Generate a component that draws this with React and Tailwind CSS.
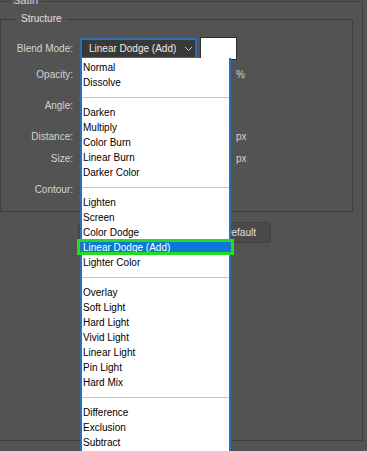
const modes = [
  'Normal',
  'Dissolve',
  null,
  'Darken',
  'Multiply',
  'Color Burn',
  'Linear Burn',
  'Darker Color',
  null,
  'Lighten',
  'Screen',
  'Color Dodge',
  'Linear Dodge (Add)',
  'Lighter Color',
  null,
  'Overlay',
  'Soft Light',
  'Hard Light',
  'Vivid Light',
  'Linear Light',
  'Pin Light',
  'Hard Mix',
  null,
  'Difference',
  'Exclusion',
  'Subtract',
  'Divide',
  null,
  'Hue',
];

const selected = 'Linear Dodge (Add)';

function Chevron() {
  return (
    <svg width="9" height="6" viewBox="0 0 9 6" fill="none" stroke="#c8c8c8" strokeWidth="1">
      <path d="M1 1l3.5 3.5L8 1" />
    </svg>
  );
}

function UnitRow({ label, unit, className = '' }) {
  return (
    <div className={`flex items-center h-[20px] ${className}`}>
      <span className="w-[72px] text-right">{label}</span>
      <div className="ml-[7px] w-[156px]" />
      {unit && <span>{unit}</span>}
    </div>
  );
}

function BlendList() {
  return (
    <div className="absolute left-[80px] top-[58px] w-[151px] h-[400px] bg-white border-x-2 border-[#2f6eb0] pt-[2px] text-black">
      {modes.map((m, i) =>
        m === null ? (
          <div key={i} className="h-[15px] flex items-center">
            <div className="h-px w-full bg-[#c6c6c6]" />
          </div>
        ) : m === selected ? (
          <div key={i} className="relative h-[15px] leading-[15px] pl-[1px] bg-[#0a78d4] text-white">
            {m}
            <div className="absolute -left-[5px] -right-[5px] -top-[1px] bottom-0 border-[3px] border-[#24dc24]" />
          </div>
        ) : (
          <div key={i} className="h-[15px] leading-[15px] pl-[1px]">
            {m}
          </div>
        )
      )}
    </div>
  );
}

export default function App() {
  return (
    <div className="relative w-[367px] h-[451px] overflow-hidden bg-[#535353] font-['Liberation_Sans',Arial,sans-serif] text-[10px] text-[#d4d4d4]">
      {/* Satin group */}
      <div className="relative -ml-[8px] mt-[1px] w-[371px] h-[440px] border border-[#3e3e3e]">
        <span className="absolute left-[17px] -top-[8px] bg-[#535353] px-[3px] leading-[12px] text-[11px]">
          Satin
        </span>

        {/* Structure group */}
        <div className="relative ml-[7px] mt-[17px] w-[353px] h-[193px] border border-[#3e3e3e] pt-[18px]">
          <span className="absolute left-[15px] -top-[7px] bg-[#535353] px-[5px] leading-[12px] text-[#e2e2e2]">
            Structure
          </span>

          <div className="flex items-center h-[21px]">
            <span className="w-[72px] text-right">Blend Mode:</span>
            <div className="ml-[7px] flex items-center">
              <div className="flex items-center justify-between w-[117px] h-[21px] bg-[#383838] border-2 border-[#2f6eb0] pl-[7px] pr-[2px] text-[#ececec]">
                <span>Linear Dodge (Add)</span>
                <Chevron />
              </div>
              <div className="ml-[3px] w-[37px] h-[23px] bg-white border border-[#2e2e2e]" />
            </div>
          </div>

          <UnitRow label="Opacity:" unit="%" className="mt-[5px]" />
          <UnitRow label="Angle:" className="mt-[11px]" />
          <UnitRow label="Distance:" unit="px" className="mt-[11px]" />
          <UnitRow label="Size:" unit="px" className="mt-[2px]" />
          <UnitRow label="Contour:" className="mt-[11px]" />
        </div>

        <div className="mt-[10px] flex justify-end gap-[8px] pr-[91px]">
          <button className="h-[21px] px-[12px] rounded-[3px] bg-[#4a4a4a] border border-[#424242] text-[#e0e0e0]">
            Make Default
          </button>
          <button className="h-[21px] pl-[12px] pr-[14px] rounded-[3px] bg-[#4a4a4a] border border-[#424242] text-[#e0e0e0]">
            Reset to Default
          </button>
        </div>
      </div>

      <BlendList />
    </div>
  );
}
